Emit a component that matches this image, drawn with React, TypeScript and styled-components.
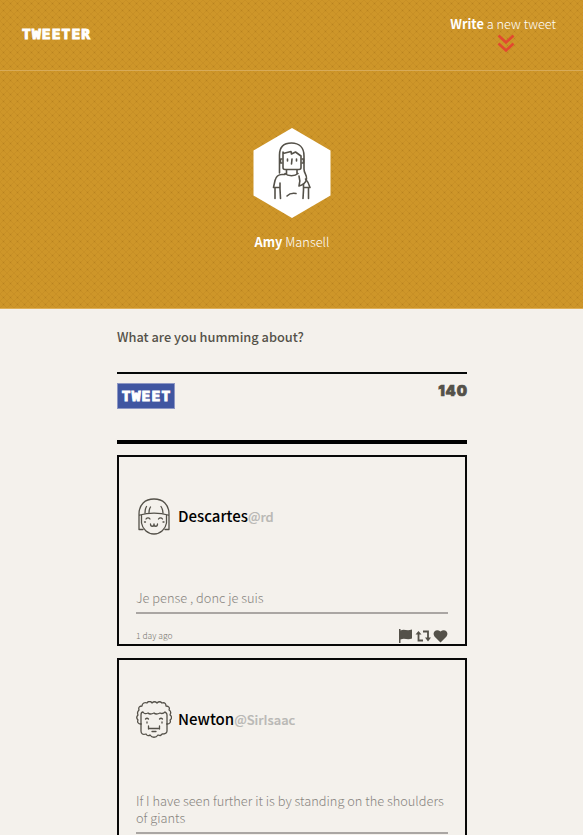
import React from "react";
import styled, { createGlobalStyle } from "styled-components";

const Global = createGlobalStyle`
  *{box-sizing:border-box}
  html,body{margin:0;background:#f4f1ec}
  body{font-family:"Noto Sans CJK SC","Open Sans",sans-serif;color:#545149;overflow:hidden;height:835px}
  h1,h2,p{margin:0;font-weight:inherit}
`;
const Header = styled.header`
  height:309px;
  border-bottom:1px solid #dfb05a;
  background-color:#ce9629;
  background-image:
    radial-gradient(circle at 50% 50%,rgba(130,85,10,.16) 0,transparent 1.5px),
    linear-gradient(45deg,transparent 46%,rgba(150,95,10,.1) 50%,transparent 54%),
    linear-gradient(-45deg,transparent 46%,rgba(150,95,10,.1) 50%,transparent 54%);
  background-size:7px 7px;
`;
const Nav = styled.nav`
  height:71px;padding:0 27px 0 22px;display:flex;justify-content:space-between;
  border-bottom:1px solid #d8ab58;
`;
const Display = styled.span`
  font-family:"DejaVu Sans Mono",monospace;font-weight:700;line-height:20px;
  font-size:14.5px;letter-spacing:1.15px;margin-right:-1.150px;
  -webkit-text-stroke:1.1px currentColor;
`;
const Logo = styled.h1`color:#fff;line-height:20px;padding-top:24px;display:flex`;
const Compose = styled.div`
  color:#fff;font-size:12.75px;line-height:20px;font-weight:300;padding-top:14px;
  display:flex;flex-direction:column;align-items:center;white-space:nowrap;
  b{font-weight:700}
  svg{margin-left:6px}
`;
const Profile = styled.section`
  display:flex;flex-direction:column;align-items:center;padding-top:57px;
  svg{display:block}
`;
const ProfileName = styled.h2`
  color:#fff;font-size:12.8px;line-height:20px;font-weight:300;margin-top:14px;padding-left:1px;
  b{font-weight:700}
`;
const Main = styled.main`width:350px;margin-left:117px`;
const Form = styled.form`height:135px;border-bottom:4px solid #000`;
const Prompt = styled.p`height:65px;padding-top:18px;line-height:20px;font-size:12.8px;font-weight:500;border-bottom:2px solid #050808`;
const Actions = styled.div`display:flex;justify-content:space-between;align-items:flex-start;padding-top:9px`;
const TweetButton = styled.button`
  width:58px;height:26px;padding:0;border:1px solid #8d97c4;background:#4056a1;color:#fff;
  display:flex;align-items:center;justify-content:center;
`;
const Counter = styled.div`
  height:15px;display:flex;align-items:center;
  font-family:Inter,sans-serif;font-weight:900;font-size:14.5px;letter-spacing:.9px;margin-right:-.9px;
  -webkit-text-stroke:.7px currentColor;
`;
const Feed = styled.section`padding-top:11px;display:flex;flex-direction:column;gap:12px`;
const Card = styled.article`min-height:191px;border:2px solid #080808;padding:0 17px;display:flex;flex-direction:column`;
const Author = styled.header`
  height:120px;flex-shrink:0;display:flex;align-items:center;gap:6px;font-size:15px;line-height:20px;
  span{padding-bottom:2px}
  b{font-weight:500;color:#000}
  em{font-style:normal;font-weight:500;font-size:12.9px;color:#b9b8b5;-webkit-text-stroke:.2px #b9b8b5}
`;
const Message = styled.p`padding:12px 0 6px;font-size:12.8px;line-height:17px;font-weight:300;color:#88857f;border-bottom:2px solid #aaa6a3;white-space:pre-line`;
const Footer = styled.footer`
  display:flex;justify-content:space-between;align-items:center;padding-top:14px;font-size:8.5px;font-weight:300;line-height:15px;color:#77746d;
`;
const Icons = styled.span`display:flex;gap:2px`;

const Chevrons = () => (
  <svg width="18" height="19" viewBox="0 0 18 19" fill="none" stroke="#e2492f" strokeWidth="2.7">
    <path d="M1.500 1.500 9 8.500l7.500-7M1.500 9.500 9 16.500l7.500-7" />
  </svg>
);
const Avatar = () => (
  <svg width="78" height="90" viewBox="0 0 78 90" fill="none">
    <path d="M39 0 77.500 22.500v45L39 90 .5 67.500v-45Z" fill="#fff" />
    <g stroke="#545149" strokeWidth="1.600" strokeLinejoin="round" strokeLinecap="round">
      <path d="M26.500 45V27C26.500 19 31 15 38.500 15S51 19.500 51 28v13c0 5 3 5 2.500 10-.5 4-4 6-7.500 7 1-3 1-7 0-10" />
      <path d="M30 24v15.500c0 1 1 2 2 2h14c1 0 2-1 2-2V28M30 25.500l8-2 .5 2.500 4-2 5.500 4" />
      <path d="M29 31h-1.500v4H29M49 31h1.500v4H49M34.500 31v2M43.500 31v2M39 31l-.5 5M33.500 42v4M44 42v4M32 45.500c3 3 10 3 13 0" />
      <path d="M32 46.500h-3c-4 0-6 2-7 6l-1.500 7h6.500M27 55v6l.5 9.500M22 60v10.500M52.500 51c2 2 3.500 5 4.500 8.500h-6M50.500 56v6l-.5 8.500M55.500 60v10.500M34 68c2-2 6-3 9-2.500" />
    </g>
  </svg>
);
const DescartesFace = () => (
  <svg width="36" height="38" viewBox="0 0 36 38" fill="none" stroke="#545149" strokeWidth="1.300" strokeLinecap="round" strokeLinejoin="round">
    <path d="M7 31.500H3V16C3 6.500 9 1 18 1s15 5.500 15 15v15.500h-4M4 17c8-2.500 20-2.500 28 0M5.500 17v8c1 6 6 11 12.500 11s11.500-5 12.500-11v-8" />
    <path d="M9 15c0-3 .5-5 1.500-6.500M13 14.500c0-2 .5-4 1.500-5.500M27 15c0-3-1-5-2-6.500M10 21c1-1.500 3-1.500 4 0M22.500 21c1-1.500 3-1.500 4 0M8.500 24h1M27 24h1M14.500 26c0 3 3.500 3 3.500 0 0 3 3.500 3 3.500 0" />
  </svg>
);
const NewtonFace = () => (
  <svg width="36" height="38" viewBox="0 0 36 38" fill="none" stroke="#545149" strokeWidth="1.300" strokeLinecap="round" strokeLinejoin="round">
    <path d="M5 23c-3 0-4-2-3-4-2-2-1-4 0-5-1-2 0-4 1-5-1-3 1-4 3-4 0-3 3-4 5-3 1-2 4-2 5 0 2-2 4-1 5 0 2-2 4-1 5 0 3-1 4 1 4 3 3 0 4 2 3 4 2 1 2 3 1 5 2 1 2 4 0 5 1 2 0 4-3 4" />
    <path d="M5 23V14c0-2 1-3 2-3 1 2 3 2 5 1 2 2 4 1 6 0 2 2 4 1 6 0 2 1 4 0 5-1 1 1 2 1 2 3v9" />
    <path d="M5 23v7c0 3 2 4 5 3 1 2 3 2 4 1 2 3 6 3 8 0 2 1 3 1 4-1 3 0 5-1 5-3v-7M9.500 18c1-1 2-1 3 0M23.500 18c1-1 2-1 3 0M11 21v1M26 21v1M12.500 25v3M12.500 27.500h11M23.500 25v3M16 30.500h4" />
  </svg>
);
const Flag = () => (
  <svg width="15" height="14" viewBox="0 0 15 14" fill="#545149"><path d="M1 0h1.500v1.500c4-2 6 1 11.500-1v9c-5 2-7-1-11.500 1V14H1Z" /></svg>
);
const Retweet = () => (
  <svg width="16" height="14" viewBox="0 0 16 14" fill="none" stroke="#545149" strokeWidth="1.800"><path d="M3.500 5v6.500H8M8 2.500h5V9" /><path d="M.5 5.500 3.500 2l3 3.500ZM10 8.500h6L13 12.500Z" fill="#545149" stroke="none" /></svg>
);
const Heart = () => (
  <svg width="15" height="14" viewBox="0 0 15 14" fill="#545149"><path d="M7.500 13.500 1.500 7.500C-1.500 3 3.500-1 7.500 2.500 11.500-1 16.500 3 13.500 7.500Z" /></svg>
);

type Tweet = { name: string; handle: string; text: string; face: React.ReactNode };
const tweets: Tweet[] = [
  { name: "Descartes", handle: "@rd", text: "Je pense , donc je suis", face: <DescartesFace /> },
  { name: "Newton", handle: "@SirIsaac", text: "If I have seen further it is by standing on the shoulders\nof giants", face: <NewtonFace /> },
];

export default function App() {
  return (
    <>
      <Global />
      <Header>
        <Nav>
          <Logo><Display>TWEETER</Display></Logo>
          <Compose><span><b>Write</b> a new tweet</span><Chevrons /></Compose>
        </Nav>
        <Profile><Avatar /><ProfileName><b>Amy</b> Mansell</ProfileName></Profile>
      </Header>
      <Main>
        <Form>
          <Prompt>What are you humming about?</Prompt>
          <Actions>
            <TweetButton type="button"><Display>TWEET</Display></TweetButton>
            <Counter>140</Counter>
          </Actions>
        </Form>
        <Feed>
          {tweets.map(t => (
            <Card key={t.handle}>
              <Author>{t.face}<span><b>{t.name}</b><em>{t.handle}</em></span></Author>
              <Message>{t.text}</Message>
              <Footer><span>1 day ago</span><Icons><Flag /><Retweet /><Heart /></Icons></Footer>
            </Card>
          ))}
        </Feed>
      </Main>
    </>
  );
}
